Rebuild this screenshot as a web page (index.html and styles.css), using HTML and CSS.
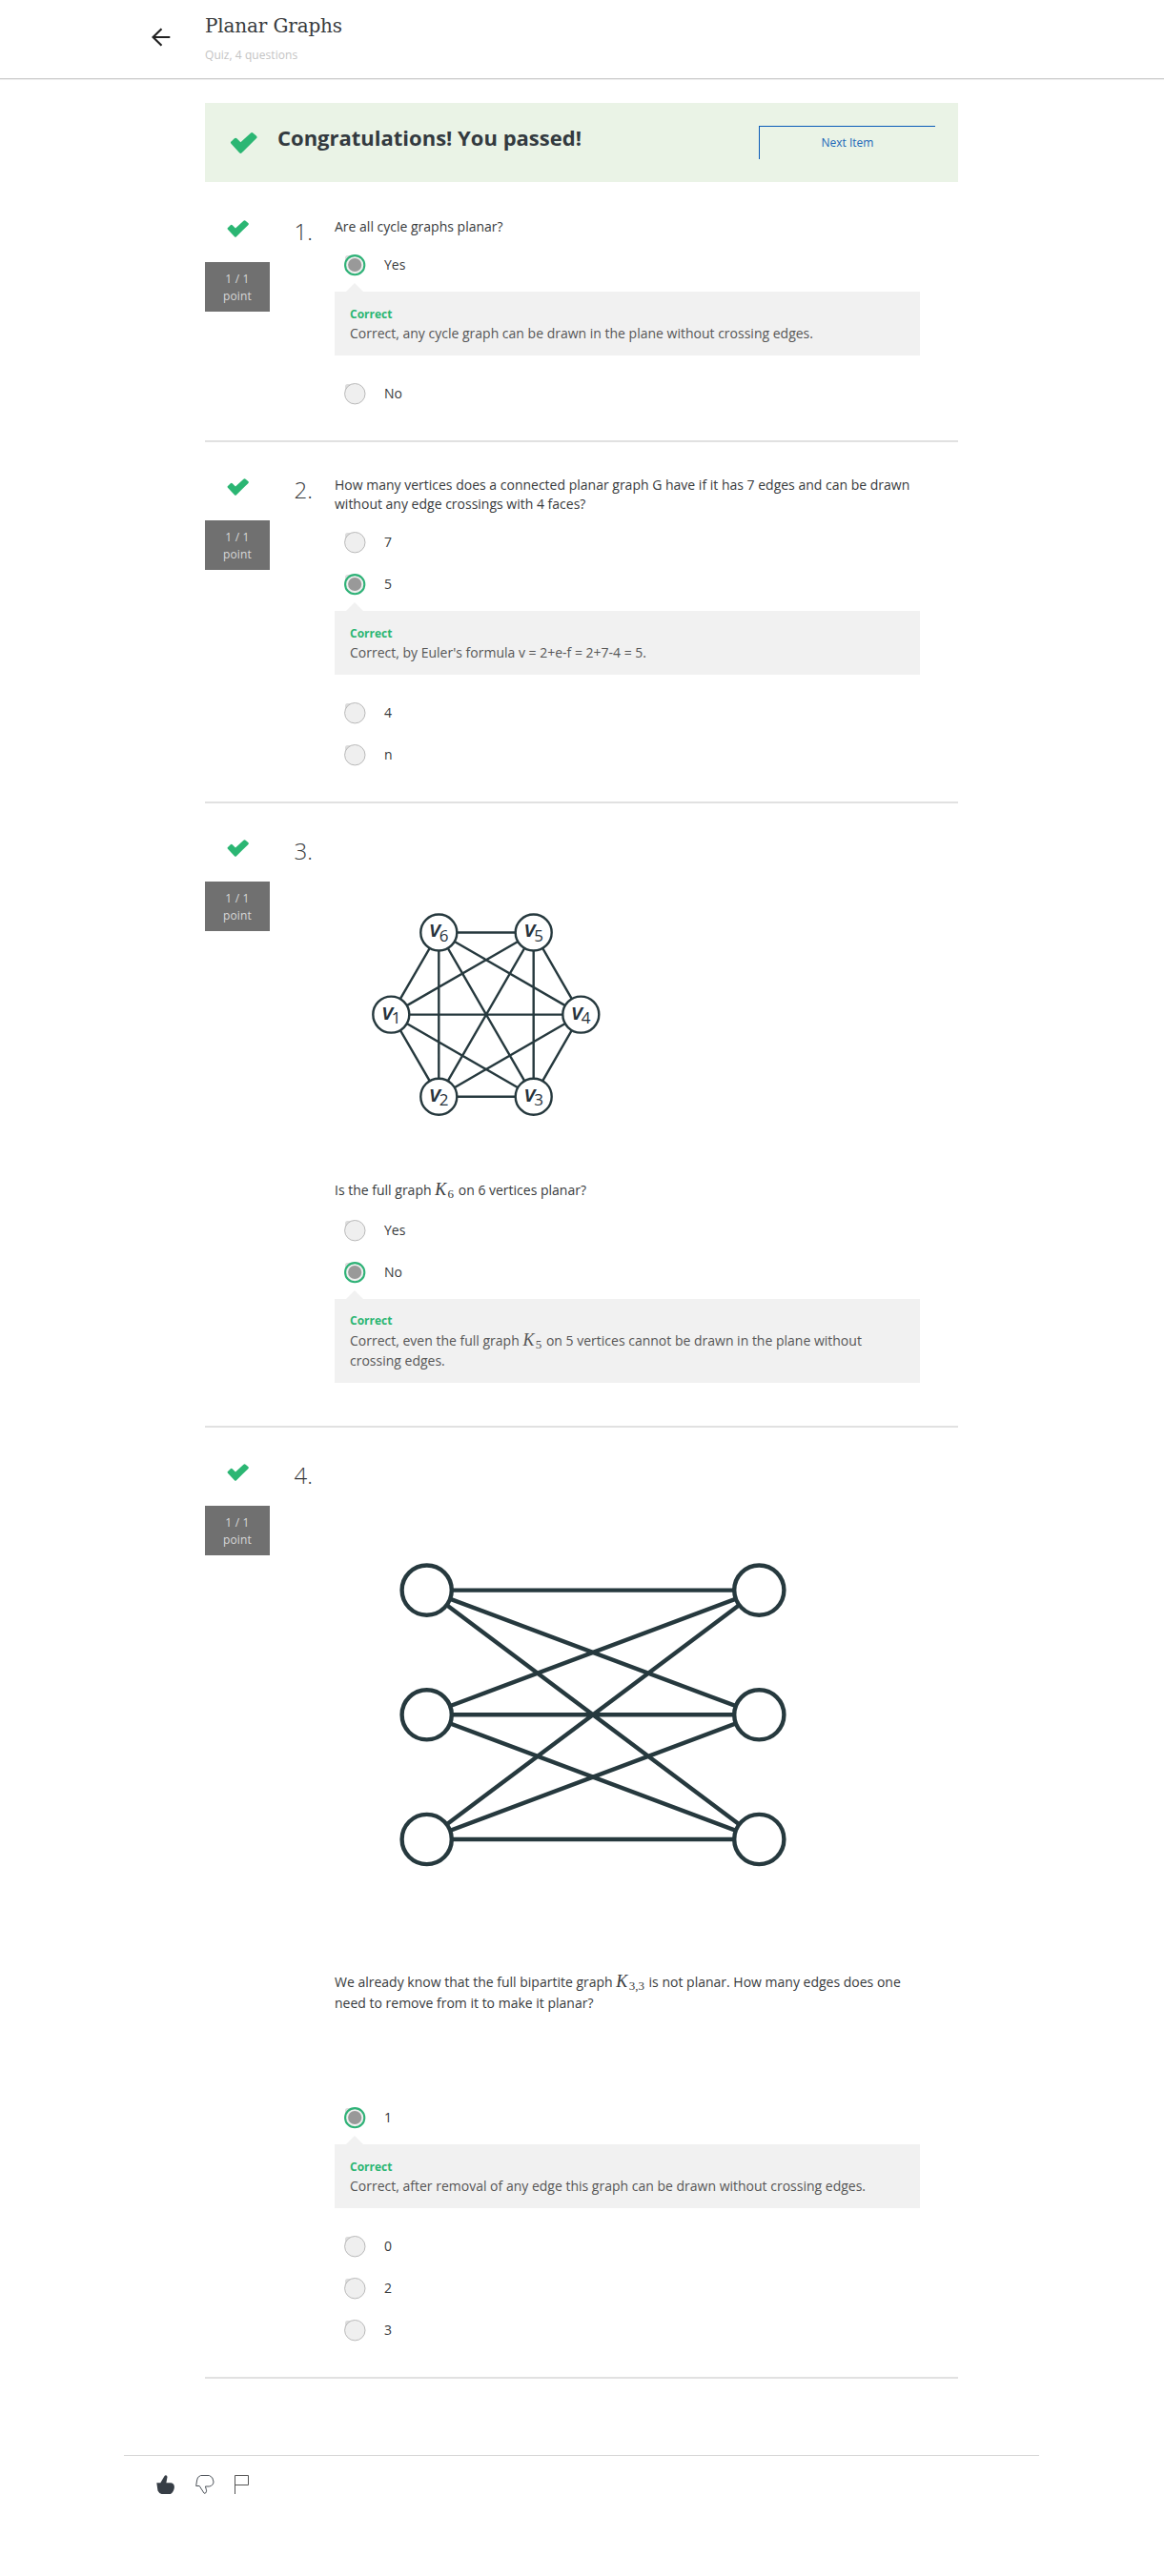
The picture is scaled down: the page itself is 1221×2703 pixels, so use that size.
FILE: index.html
```html
<!DOCTYPE html>
<html lang="en">
<head>
<meta charset="utf-8">
<title>Planar Graphs</title>
<link rel="stylesheet" href="styles.css">
</head>
<body>
<svg class="defs" width="0" height="0" aria-hidden="true">
  <symbol id="check" viewBox="0 0 22 17"><path d="M1.2 7.2 3.6 4.9a1.3 1.3 0 0 1 1.9 0L8.6 8 16.7.5a1.6 1.6 0 0 1 2.1 0l2.5 2.3a1.3 1.3 0 0 1 0 2L9.6 16.4a1.4 1.4 0 0 1-2 0L.9 9.1a1.3 1.3 0 0 1 .3-1.9z"/></symbol>
  <symbol id="radio-off" viewBox="0 0 23 23"><rect x="1" y="1" width="12" height="12" rx="2.5" fill="#dcdcdc"/><circle cx="11.3" cy="11.2" r="10.7" fill="#efefef" stroke="#b9b9b9" stroke-width="1"/></symbol>
  <symbol id="radio-on" viewBox="0 0 23 23"><rect x="1" y="1" width="12" height="12" rx="2.5" fill="#dcdcdc"/><circle cx="11.2" cy="11.2" r="10.1" fill="#efefef" stroke="#2fb277" stroke-width="2.1"/><circle cx="11.2" cy="11" r="7.1" fill="#999"/></symbol>
</svg>

<header class="topbar">
  <svg class="back" width="20" height="20" viewBox="0 0 20 20"><path d="M10.5 1.2 1.5 10l9 8.8M1.5 10h17.8" /></svg>
  <div>
    <h1 class="title">Planar Graphs</h1>
    <p class="subtitle">Quiz, 4 questions</p>
  </div>
</header>

<main class="quiz">
  <section class="banner">
    <svg class="check banner-check"><use href="#check"/></svg>
    <h2 class="banner-text">Congratulations! You passed!</h2>
    <a class="next">Next Item</a>
  </section>

  <section class="question">
    <div class="score"><svg class="check"><use href="#check"/></svg><div class="points">1 / 1<br>point</div></div>
    <div class="number">1.</div>
    <div class="body">
      <p class="prompt">Are all cycle graphs planar?</p>
      <div class="option"><svg class="radio"><use href="#radio-on"/></svg>Yes</div>
      <div class="feedback"><strong class="verdict">Correct</strong><p>Correct, any cycle graph can be drawn in the plane without crossing edges.</p></div>
      <div class="option"><svg class="radio"><use href="#radio-off"/></svg>No</div>
    </div>
  </section>

  <section class="question">
    <div class="score"><svg class="check"><use href="#check"/></svg><div class="points">1 / 1<br>point</div></div>
    <div class="number">2.</div>
    <div class="body">
      <p class="prompt">How many vertices does a connected planar graph G have if it has 7 edges and can be drawn<br>without any edge crossings with 4 faces?</p>
      <div class="option"><svg class="radio"><use href="#radio-off"/></svg>7</div>
      <div class="option"><svg class="radio"><use href="#radio-on"/></svg>5</div>
      <div class="feedback"><strong class="verdict">Correct</strong><p>Correct, by Euler's formula v = 2+e-f = 2+7-4 = 5.</p></div>
      <div class="option"><svg class="radio"><use href="#radio-off"/></svg>4</div>
      <div class="option"><svg class="radio"><use href="#radio-off"/></svg>n</div>
    </div>
  </section>

  <section class="question">
    <div class="score"><svg class="check"><use href="#check"/></svg><div class="points">1 / 1<br>point</div></div>
    <div class="number">3.</div>
    <div class="body">
      <svg class="figure" width="614" height="360" viewBox="351 878 614 360">
        <g class="edges thin">
          <path d="M460.3 978.5H559.7L609.3 1064.6 559.7 1150.7H460.3L410.3 1064.6ZM460.3 978.5V1150.7M559.7 978.5V1150.7M410.3 1064.6H609.3M460.3 978.5 559.7 1150.7M559.7 978.5 460.3 1150.7M460.3 978.5 609.3 1064.6 460.3 1150.7M559.7 978.5 410.3 1064.6 559.7 1150.7"/>
          <circle cx="460.3" cy="978.5" r="19"/><circle cx="559.7" cy="978.5" r="19"/>
          <circle cx="410.3" cy="1064.6" r="19"/><circle cx="609.3" cy="1064.6" r="19"/>
          <circle cx="460.3" cy="1150.7" r="19"/><circle cx="559.7" cy="1150.7" r="19"/>
        </g>
        <g class="vertex">
          <text x="450.5" y="983.3">v</text><text class="sub" x="460.8" y="987.5">6</text>
          <text x="549.9" y="983.3">v</text><text class="sub" x="560.2" y="987.5">5</text>
          <text x="400.7" y="1069.5">v</text><text class="sub" x="410.8" y="1073.7">1</text>
          <text x="599.5" y="1069.5">v</text><text class="sub" x="609.8" y="1073.7">4</text>
          <text x="450.5" y="1155.5">v</text><text class="sub" x="460.8" y="1159.7">2</text>
          <text x="549.9" y="1155.5">v</text><text class="sub" x="560.2" y="1159.7">3</text>
        </g>
      </svg>
      <p class="prompt math-line">Is the full graph <span class="math">K<span class="msub">6</span></span> on 6 vertices planar?</p>
      <div class="option"><svg class="radio"><use href="#radio-off"/></svg>Yes</div>
      <div class="option"><svg class="radio"><use href="#radio-on"/></svg>No</div>
      <div class="feedback two-line"><strong class="verdict">Correct</strong><p>Correct, even the full graph <span class="math">K<span class="msub">5</span></span> on 5 vertices cannot be drawn in the plane without<br>crossing edges.</p></div>
    </div>
  </section>

  <section class="question">
    <div class="score"><svg class="check"><use href="#check"/></svg><div class="points">1 / 1<br>point</div></div>
    <div class="number">4.</div>
    <div class="body">
      <svg class="figure" width="614" height="536" viewBox="351 1533 614 536">
        <g class="edges thick">
          <path d="M447.7 1668.6H796.3L447.7 1799.3H796.3L447.7 1930H796.3L447.7 1799.3M447.7 1668.6 796.3 1799.3M447.7 1668.6 796.3 1930M796.3 1668.6 447.7 1930"/>
          <circle cx="447.7" cy="1668.6" r="26.1"/><circle cx="796.3" cy="1668.6" r="26.1"/>
          <circle cx="447.7" cy="1799.3" r="26.1"/><circle cx="796.3" cy="1799.3" r="26.1"/>
          <circle cx="447.7" cy="1930" r="26.1"/><circle cx="796.3" cy="1930" r="26.1"/>
        </g>
      </svg>
      <p class="prompt math-line spaced">We already know that the full bipartite graph <span class="math">K<span class="msub">3,3</span></span> is not planar. How many edges does one<br>need to remove from it to make it planar?</p>
      <div class="option"><svg class="radio"><use href="#radio-on"/></svg>1</div>
      <div class="feedback"><strong class="verdict">Correct</strong><p>Correct, after removal of any edge this graph can be drawn without crossing edges.</p></div>
      <div class="option"><svg class="radio"><use href="#radio-off"/></svg>0</div>
      <div class="option"><svg class="radio"><use href="#radio-off"/></svg>2</div>
      <div class="option"><svg class="radio"><use href="#radio-off"/></svg>3</div>
    </div>
  </section>
</main>

<footer class="reactions">
  <svg width="20" height="20" viewBox="0 0 20 20"><path fill="#373e46" d="M.3 8.3h4L8.600 1Q9.800-.4 11 .8q.8 1 .3 2.500L10.400 8.300H15.500Q19 9 18.900 13q-.4 4.600-4 7H5.500Q2.600 19 1.500 16.500Z"/></svg>
  <svg width="20" height="20" viewBox="0 0 20 20"><path fill="none" stroke="#4d535a" d="M.7 11.500h3.500L9 19q1 .8 1.600 0l.9-1.800q.3-1-.2-2l-.9-3.200h4.100q4.400-.8 4.500-5Q18.700 2 14.500.500H5.500Q1.500 2 1.500 6Z"/></svg>
  <svg width="16" height="20" viewBox="0 0 16 20"><path fill="none" stroke="#555" d="M.5 20V.5h14V10.500H.5"/></svg>
</footer>
</body>
</html>
```
FILE: styles.css
```css
* { box-sizing: border-box; }
body { margin: 0; min-height: 2703px; background: #fff; color: #373a3c; font: 14px/20px "Open Sans", sans-serif; }
h1, h2, p { margin: 0; }
svg { display: block; flex: none; }
.defs { position: absolute; }

.topbar { display: flex; gap: 36px; height: 83px; padding: 15px 0 0 159px; border-bottom: 1px solid #ccc; box-shadow: 0 1px 0 #eee; }
.back { margin-top: 14px; fill: none; stroke: #222; stroke-width: 2.2; }
.title { font: 400 20px/24px "DejaVu Serif", serif; letter-spacing: -.15px; }
.subtitle { margin-top: 10px; font-size: 12px; line-height: 18px; color: #c4c4c4; letter-spacing: .05px; }

.quiz { width: 790px; margin: 25px 0 0 215px; }
.banner { display: flex; height: 83px; margin-bottom: 2px; background: #eaf3e6; }
.check { width: 23px; height: 18px; fill: #2bb673; }
.banner-check { width: 29px; height: 22px; margin: 31px 0 0 26px; }
.banner-text { flex: 1; margin: 23px 0 0 21px; font-size: 22px; line-height: 26px; font-weight: 700; color: #333a3f; }
.next { width: 185px; height: 35px; margin: 24px 24px 0 0; border: solid #0a5bb8; border-width: 1px 0 0 1px; color: #1a66b8; font-size: 12px; line-height: 34px; text-align: center; }

.question { display: flex; padding: 35px 0 27px; border-bottom: 2px solid #e1e1e1; }
.score { display: flex; flex-direction: column; align-items: center; width: 68px; padding-top: 3px; }
.points { width: 68px; height: 52px; margin-top: 26px; padding-top: 9px; background: #707070; color: #d8d8d8; font-size: 12px; line-height: 18px; letter-spacing: .2px; text-align: center; }
.number { width: 68px; padding-right: 23px; font-size: 24px; font-weight: 300; line-height: 29px; text-align: right; }
.body { width: 614px; }
.prompt { margin-bottom: 8px; white-space: nowrap; }
.option { display: flex; align-items: center; gap: 19px; height: 44px; padding-left: 10px; }
.radio { width: 23px; height: 23px; }
.feedback { position: relative; height: 67px; margin: 6px 0 18px; padding: 14px 16px 13px; background: #f1f1f1; color: #565656; white-space: nowrap; }
.feedback::before { content: ""; position: absolute; left: 12px; top: -9px; border: solid transparent; border-width: 0 9.5px 9px; border-bottom-color: #f1f1f1; }
.verdict { display: block; color: #2bb673; font-size: 12px; }
.two-line { height: 88px; padding-top: 13px; }
.two-line p { line-height: 21px; }
.math-line { margin-bottom: 9px; line-height: 22px; }
.spaced { margin-bottom: 87px; }

.math { font: italic 18px/0 "Liberation Serif", serif; letter-spacing: 1.4px; }
.msub { position: relative; top: 3px; margin-right: 1px; font-size: 13px; font-style: normal; letter-spacing: 0; }

.edges { fill: none; stroke: #26393e; }
.edges circle { fill: #fff; }
.thin { stroke-width: 2.4; }
.thick { stroke-width: 4.4; }
.vertex { fill: #26323c; font-size: 24px; font-style: italic; font-weight: 600; }
.sub { font-size: 17px; font-style: normal; font-weight: 500; }

.reactions { display: flex; gap: 21px; width: 960px; margin: 80px 0 0 130px; padding: 20px 34px; border-top: 1px solid #d6d6d6; }
```
